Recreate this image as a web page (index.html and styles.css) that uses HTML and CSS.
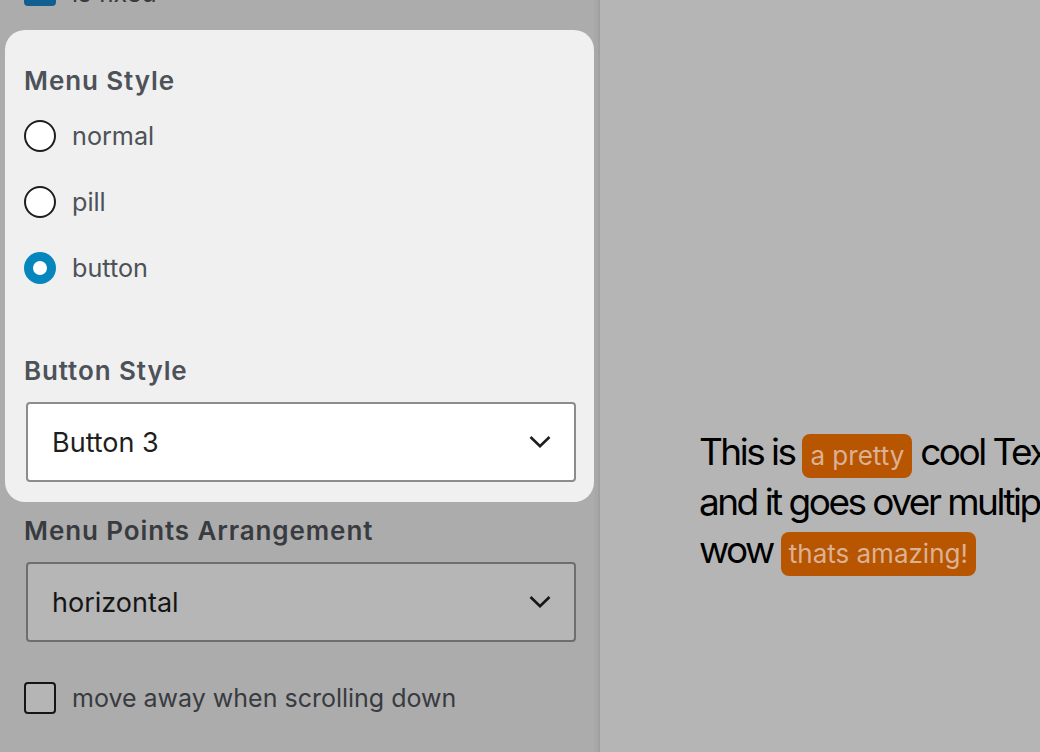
FILE: index.html
```html
<!DOCTYPE html>
<html lang="en">
<head>
<meta charset="utf-8">
<title>Menu settings</title>
<link rel="stylesheet" href="styles.css">
</head>
<body>
<div class="app">
  <aside class="sidebar">
    <label class="check-row check-row--top">
      <span class="checkbox checkbox--checked"></span>
      <span class="check-label check-label--top">is fixed</span>
    </label>

    <section class="card">
      <h3 class="field-title">Menu Style</h3>
      <div class="radio-list">
        <label class="radio-row"><span class="radio"></span><span class="radio-label">normal</span></label>
        <label class="radio-row"><span class="radio"></span><span class="radio-label">pill</span></label>
        <label class="radio-row"><span class="radio radio--on"></span><span class="radio-label">button</span></label>
      </div>
      <h3 class="field-title field-title--spaced">Button Style</h3>
      <div class="select select--light">
        <span class="select-value">Button 3</span>
        <svg class="chevron" width="22" height="14" viewBox="0 0 22 14"><path d="M1.5 2 L11 11.3 L20.5 2" fill="none" stroke="currentColor" stroke-width="2.6"/></svg>
      </div>
    </section>

    <section class="plain-field">
      <h3 class="field-title field-title--dim">Menu Points Arrangement</h3>
      <div class="select select--dim">
        <span class="select-value">horizontal</span>
        <svg class="chevron" width="22" height="14" viewBox="0 0 22 14"><path d="M1.5 2 L11 11.3 L20.5 2" fill="none" stroke="currentColor" stroke-width="2.6"/></svg>
      </div>
    </section>

    <label class="check-row check-row--bottom">
      <span class="checkbox"></span>
      <span class="check-label">move away when scrolling down</span>
    </label>
  </aside>

  <main class="preview">
    <p class="preview-text">
      <span class="line">This is <span class="pill">a pretty</span> cool Text</span>
      <span class="line">and it goes over multiple lines</span>
      <span class="line">wow <span class="pill">thats amazing!</span></span>
    </p>
  </main>
</div>
</body>
</html>
```

FILE: styles.css
```css
* { box-sizing: border-box; }
html, body { margin: 0; padding: 0; height: 100%; }
body {
  font-family: Inter, "Noto Sans", sans-serif;
  background: #b5b5b5;
  overflow: hidden;
}
.app {
  display: flex;
  height: 752px;
  width: 1040px;
  overflow: hidden;
}
.sidebar {
  width: 600px;
  flex: 0 0 600px;
  background: #acacac;
  border-right: 2px solid #a0a0a0;
  box-shadow: inset -4px 0 0 #a8a8a8;
  padding: 0 22px 0 24px;
  display: flex;
  flex-direction: column;
}
.check-row {
  display: flex;
  align-items: center;
  gap: 16px;
}
.check-row--top {
  margin-top: -26px;
  height: 32px;
}
.check-row--bottom { margin-top: 40px; }
.checkbox {
  width: 32px;
  height: 32px;
  flex: 0 0 32px;
  border: 2px solid #151515;
  border-radius: 4px;
  background: #b5b5b5;
}
.checkbox--checked {
  background: #0f6090;
  border-color: #0f6090;
}
.check-label {
  font-size: 25px;
  color: #383b40;
  line-height: 32px;
}
.check-label--top {
  line-height: 26px;
  padding-top: 6px;
}
.card {
  margin: 24px -18px 0 -19px;
  padding: 35px 18px 20px 19px;
  background: #f0f0f0;
  border-radius: 20px;
}
.field-title {
  margin: 0;
  font-size: 26px;
  line-height: 32px;
  font-weight: 600;
  letter-spacing: 0.9px;
  color: #4d5258;
}
.field-title--spaced { margin-top: 71px; }
.field-title--dim { color: #383b40; }
.radio-list {
  display: flex;
  flex-direction: column;
  gap: 34px;
  margin-top: 23px;
}
.radio-row {
  display: flex;
  align-items: center;
  gap: 16px;
  height: 32px;
}
.radio {
  width: 32px;
  height: 32px;
  flex: 0 0 32px;
  border-radius: 50%;
  border: 2px solid #1e1e1e;
  background: #fff;
}
.radio--on {
  border: 9px solid #0786be;
}
.radio-label {
  font-size: 25.2px;
  color: #4d5258;
}
.select {
  margin-top: 15px;
  height: 80px;
  border: 2px solid #8c8c8c;
  border-radius: 4px;
  display: flex;
  align-items: center;
  justify-content: space-between;
  padding: 0 23px 0 24px;
  color: #1e1e1e;
  margin-left: 2px;
}
.select--light { background: #fff; }
.select--dim {
  background: #b6b6b6;
  border-color: #6e6e6e;
  color: #151515;
}
.select-value { font-size: 27px; }
.chevron { display: block; }
.plain-field { margin-top: 13px; }
.plain-field .select { margin-top: 15px; }

.preview {
  flex: 1;
  background: #b5b5b5;
  padding: 428px 0 0 99px;
  overflow: hidden;
}
.preview-text {
  margin: 0;
  white-space: nowrap;
  font-size: 37px;
  line-height: 48px;
  letter-spacing: -0.068em;
  color: #000;
}
.line { display: block; }
.pill {
  display: inline-block;
  background: #b85500;
  color: #dcb193;
  font-size: 26px;
  line-height: 36px;
  letter-spacing: 0;
  padding: 4px 8px;
  border-radius: 8px;
}
```
